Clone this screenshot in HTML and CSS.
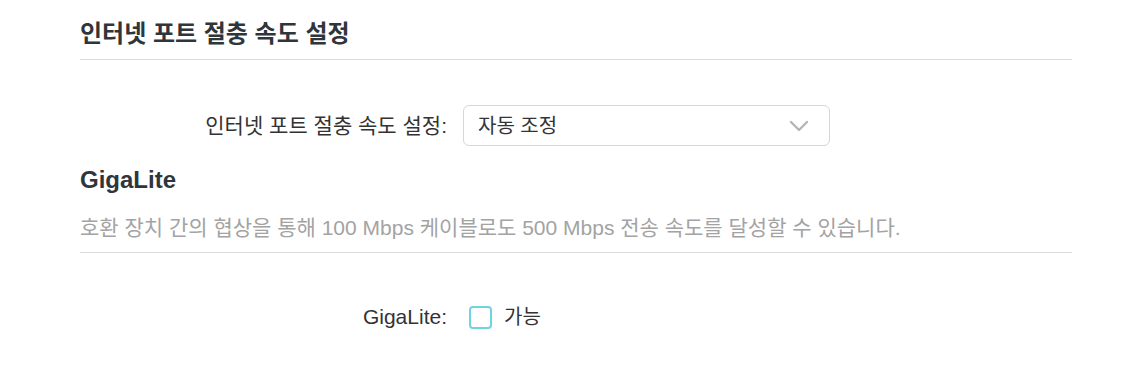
FILE: index.html
```html
<!DOCTYPE html>
<html lang="ko">
<head>
  <meta charset="UTF-8" />
  <title>인터넷 포트 절충 속도 설정</title>
  <link rel="stylesheet" href="styles.css">
</head>
<body>
  <div class="page">
    <h2 class="section-title">인터넷 포트 절충 속도 설정</h2>

    <div class="form-row select-row">
      <label class="form-label" for="speed">인터넷 포트 절충 속도 설정:</label>
      <div class="select-box" id="speed">
        <span class="select-value">자동 조정</span>
        <svg class="chevron" width="20" height="12" viewBox="0 0 20 12">
          <path d="M2 2 L10 10 L18 2" fill="none" stroke="#b5b5b5" stroke-width="2.4" stroke-linecap="round" stroke-linejoin="round"/>
        </svg>
      </div>
    </div>

    <h3 class="sub-title">GigaLite</h3>
    <p class="desc">호환 장치 간의 협상을 통해 100 Mbps 케이블로도 500 Mbps 전송 속도를 달성할 수 있습니다.</p>

    <div class="form-row check-row">
      <span class="form-label">GigaLite:</span>
      <label class="check">
        <span class="check-box"></span>
        <span class="check-text">가능</span>
      </label>
    </div>
  </div>
</body>
</html>
```

FILE: styles.css
```css
body {
  margin: 0;
  background: #ffffff;
  font-family: "Liberation Sans", "Noto Sans CJK KR", sans-serif;
  color: #333333;
}

.page {
  padding: 0 62px 0 80px;
}

.section-title {
  margin: 0;
  padding: 20px 0 11px;
  font-size: 24px;
  line-height: 28px;
  font-weight: bold;
  color: #2f363b;
  border-bottom: 1px solid #dcdcdc;
}

.form-row {
  display: flex;
  align-items: center;
  gap: 16px;
}

.form-label {
  width: 367px;
  text-align: right;
  font-size: 21px;
  line-height: 26px;
  color: #333333;
}

.select-row {
  margin-top: 45px;
}

.select-box {
  width: 367px;
  height: 41px;
  box-sizing: border-box;
  border: 1px solid #d6d6d6;
  border-radius: 6px;
  display: flex;
  align-items: center;
  justify-content: space-between;
  padding: 0 20px 0 14px;
}

.select-value {
  font-size: 20px;
  line-height: 26px;
  color: #333333;
}

.sub-title {
  margin: 20px 0 0;
  font-size: 24px;
  line-height: 28px;
  font-weight: bold;
  color: #2f363b;
}

.desc {
  margin: 22px 0 0;
  padding-bottom: 12px;
  font-size: 21px;
  line-height: 24px;
  color: #a3a3a3;
  border-bottom: 1px solid #dcdcdc;
}

.check-row {
  margin-top: 51px;
}

.check {
  display: flex;
  align-items: center;
  gap: 12px;
  margin-left: 6px;
}

.check-box {
  width: 23px;
  height: 23px;
  box-sizing: border-box;
  border: 2px solid #6fd4e2;
  border-radius: 4px;
}

.check-text {
  font-size: 20px;
  line-height: 24px;
  color: #333333;
}
```
